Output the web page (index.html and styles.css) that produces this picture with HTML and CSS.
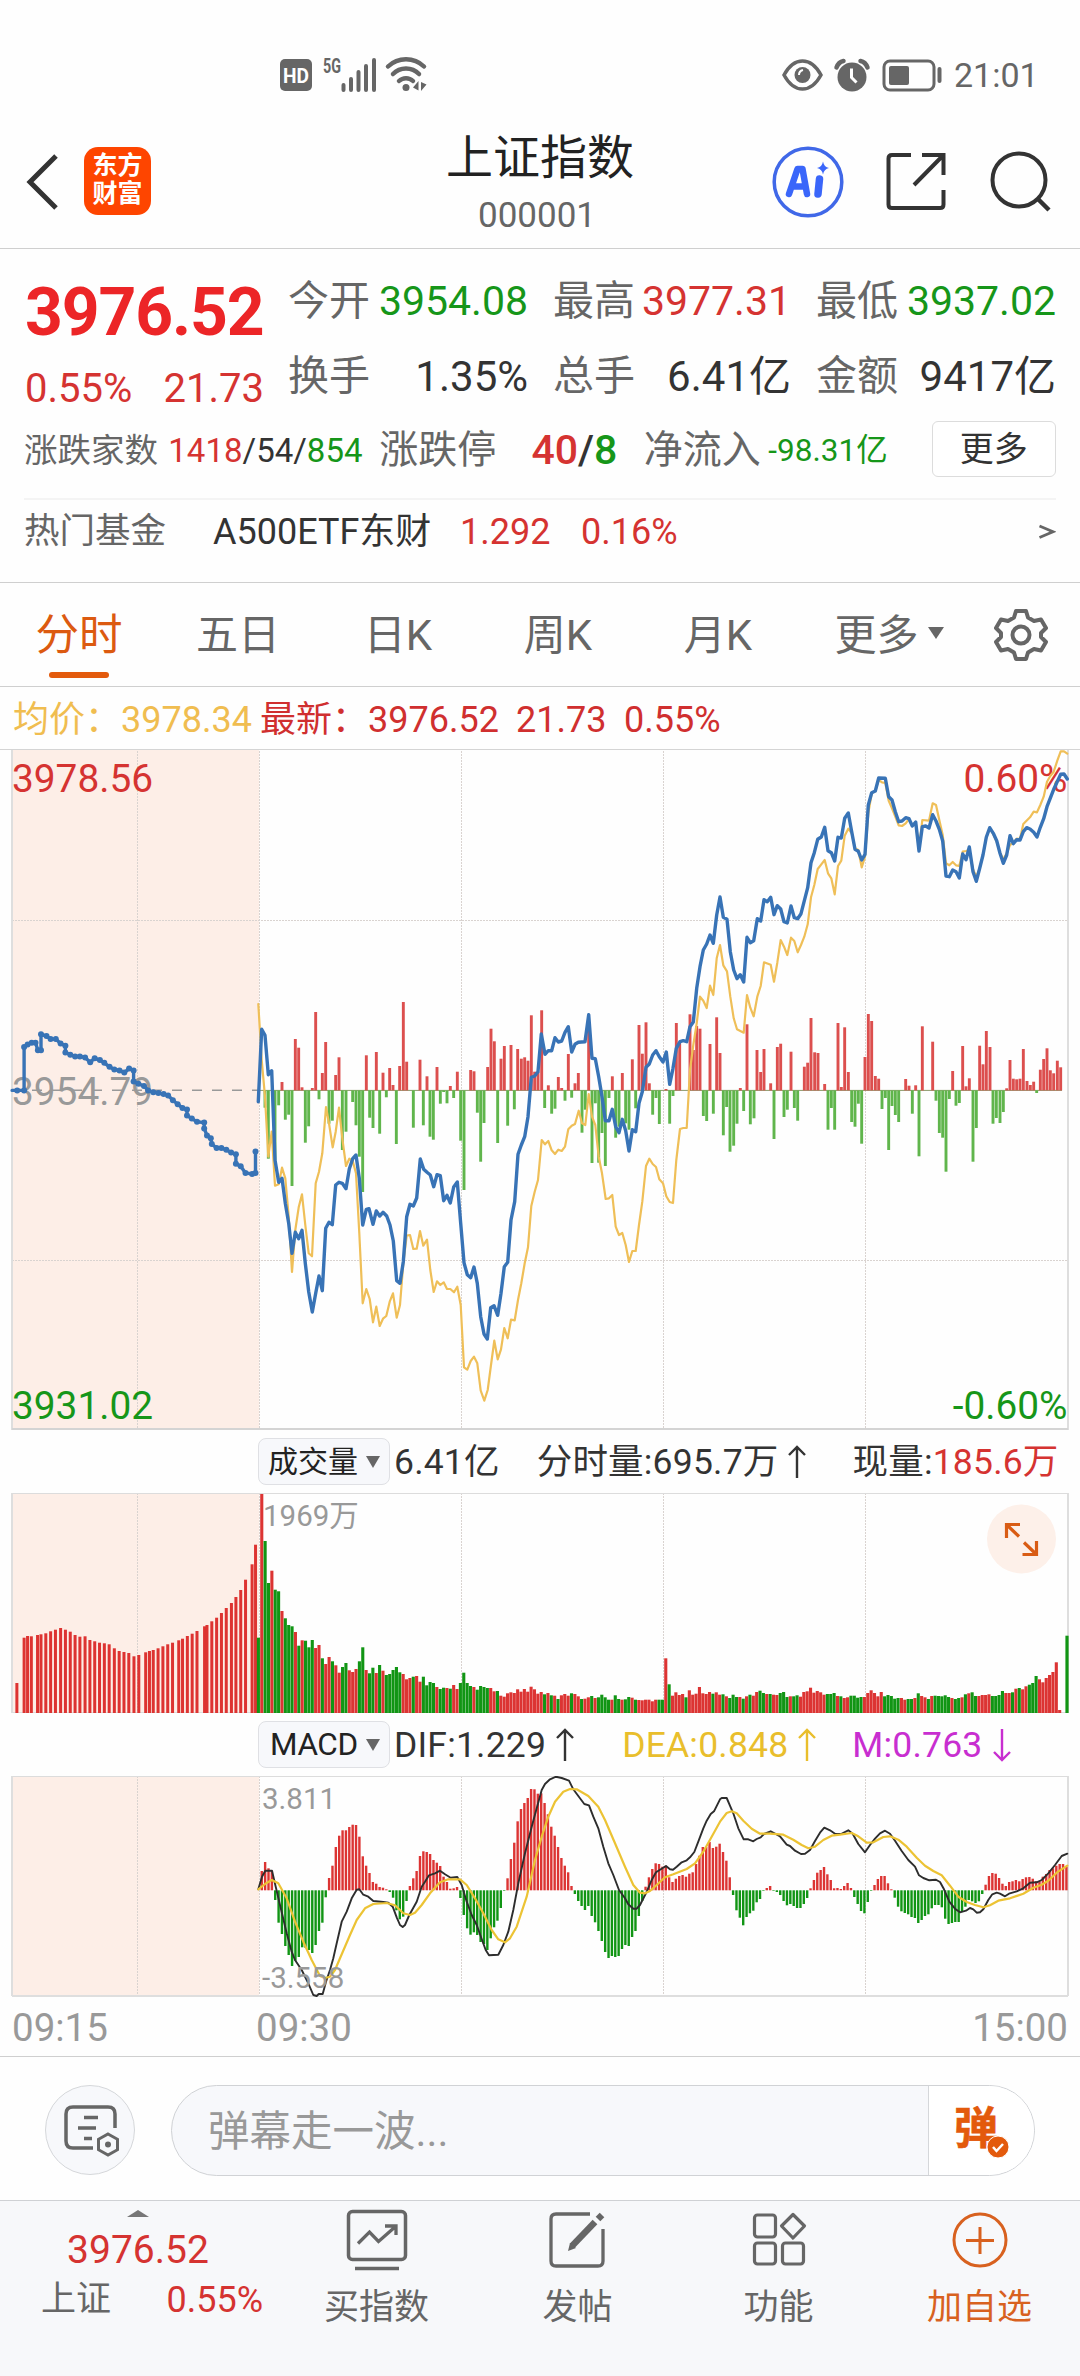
FILE: index.html
```html
<!DOCTYPE html>
<html lang="zh-CN">
<head>
<meta charset="utf-8">
<title>上证指数 000001</title>
<link rel="stylesheet" href="styles.css">
</head>
<body>
<div class="statusbar">
  <svg class="status-left" width="150" height="40" viewBox="0 0 150 40">
    <rect x="0" y="4" width="32" height="32" rx="5" fill="#666"/>
    <text x="16" y="27.500" class="hd" textLength="26" lengthAdjust="spacingAndGlyphs">HD</text>
    <text x="43" y="18" class="g5" textLength="18" lengthAdjust="spacingAndGlyphs">5G</text>
    <path d="M63.500 35v-5M71 35V24M78.500 35V17M86 35V11M94 35V5" stroke="#666" stroke-width="4" stroke-linecap="round" fill="none"/>
    <path d="M108 11.500a26 26 0 0 1 36 0M113 19a18 18 0 0 1 26 0M119 26a10 10 0 0 1 14 0" stroke="#666" stroke-width="4.500" stroke-linecap="round" fill="none"/>
    <circle cx="126" cy="32.500" r="3.500" fill="#666"/>
    <path d="M133 32.500l5.500-6.500v9.500zM141 27v9l5.500-6.500z" fill="#666"/>
  </svg>
  <svg class="status-right" width="162" height="40" viewBox="0 0 162 40">
    <path d="M2 20C8 9 14 6 20.500 6S33 9 39 20C33 31 27 34 20.500 34S8 31 2 20z" fill="none" stroke="#666" stroke-width="3.500"/>
    <circle cx="20.500" cy="20" r="8" fill="#666"/><path d="M17 20q0-4 4-5" stroke="#fff" stroke-width="2" fill="none"/>
    <circle cx="70" cy="22" r="14.500" fill="#666"/>
    <path d="M69.500 13.500v9l5 5" stroke="#fff" stroke-width="3" fill="none"/>
    <path d="M54.500 12.500q2-5.500 7-6.500M85.500 12.500q-2-5.500-7-6.500" stroke="#666" stroke-width="4.500" stroke-linecap="round" fill="none"/>
    <rect x="102" y="6" width="50" height="29" rx="6" fill="none" stroke="#666" stroke-width="3"/>
    <rect x="107" y="11" width="20" height="19" rx="2" fill="#666"/>
    <path d="M157.500 14v12" stroke="#666" stroke-width="4" stroke-linecap="round"/>
  </svg>
  <span class="clock">21:01</span>
</div>

<header class="topbar">
  <svg class="back" width="34" height="60" viewBox="0 0 34 60"><path d="M30 4L4 30l26 26" fill="none" stroke="#333" stroke-width="5"/></svg>
  <div class="logo"><span>东方</span><span>财富</span></div>
  <div class="title"><h1>上证指数</h1><p>000001</p></div>
  <svg class="ai" width="72" height="72" viewBox="0 0 72 72">
    <circle cx="36" cy="36" r="33.800" fill="none" stroke="#4068e8" stroke-width="3.500"/>
    <path d="M17 48L25.500 23h5L35 48M20.500 40.500h12" fill="none" stroke="#3a66fa" stroke-width="6.500" stroke-linecap="round" stroke-linejoin="round"/>
    <path d="M47.500 33l-1.500 15" stroke="#3a66fa" stroke-width="7.500" stroke-linecap="round"/>
    <path d="M51 15.500q1 5.500 6 6.500-5 1-6 6.500-1-5.500-6-6.500 5-1 6-6.500z" fill="#3a66fa"/>
  </svg>
  <svg class="share" width="60" height="60" viewBox="0 0 60 60"><path d="M25 4H6q-3.500 0-3.500 3.500v46Q2.500 57 6 57h48q3.500 0 3.500-3.500V39M36 4h21.500v20M57.500 4L28 34" fill="none" stroke="#333" stroke-width="4"/></svg>
  <svg class="search" width="64" height="64" viewBox="0 0 64 64"><circle cx="29" cy="29" r="26.500" fill="none" stroke="#333" stroke-width="4"/><path d="M48 48l11 11" stroke="#333" stroke-width="4.500"/></svg>
</header>

<section class="quote">
  <div class="quote-top">
    <div class="price">
      <strong>3976.52</strong>
      <div class="change"><span>0.55%</span><span>21.73</span></div>
    </div>
    <dl class="stats">
      <div><dt>今开</dt><dd class="down">3954.08</dd></div>
      <div><dt>最高</dt><dd class="up">3977.31</dd></div>
      <div><dt>最低</dt><dd class="down">3937.02</dd></div>
      <div><dt>换手</dt><dd class="wide">1.35%</dd></div>
      <div><dt>总手</dt><dd class="wide">6.41亿</dd></div>
      <div><dt>金额</dt><dd class="wide">9417亿</dd></div>
    </dl>
  </div>
  <div class="breadth">
    <span class="b-label small">涨跌家数</span>
    <span class="b-count"><i class="up">1418</i>/54/<i class="down">854</i></span>
    <span class="b-label">涨跌停</span>
    <span class="b-limit"><i class="up">40</i>/<i class="down">8</i></span>
    <span class="b-label">净流入</span>
    <span class="b-flow down">-98.31亿</span>
    <button class="more">更多</button>
  </div>
  <div class="fund">
    <span class="f-label">热门基金</span>
    <span class="f-name">A500ETF东财</span>
    <span class="f-price up">1.292</span>
    <span class="f-rate up">0.16%</span>
    <svg class="f-go" width="18" height="18" viewBox="0 0 18 18"><path d="M1.500 3L15 8.700 1.500 14.500" fill="none" stroke="#666" stroke-width="2.800"/></svg>
  </div>
</section>

<nav class="tabs">
  <span class="tab active">分时</span>
  <span class="tab">五日</span>
  <span class="tab">日K</span>
  <span class="tab">周K</span>
  <span class="tab">月K</span>
  <span class="tab tab-more">更多<i></i></span>
  <svg width="54" height="56" viewBox="0 0 54 56"><path d="M22 4h10l2 6.500 6 3.500 7-1.500 5 8.500-5 5v4l5 5-5 8.500-7-1.500-6 3.500-2 6.500H22l-2-6.500-6-3.500-7 1.500L2 35l5-5v-4l-5-5 5-8.500L14 14l6-3.500z" fill="none" stroke="#666" stroke-width="4" stroke-linejoin="round"/><circle cx="27" cy="28" r="8.500" fill="none" stroke="#666" stroke-width="4"/></svg>
</nav>

<div class="legend">
  <span class="l-avg">均价：</span><span class="l-avg l-v1">3978.34</span>
  <span class="l-last">最新：</span><span class="l-last l-v2">3976.52</span>
  <span class="l-last l-v3">21.73</span><span class="l-last l-v4">0.55%</span>
</div>

<svg class="chart" id="price" width="1080" height="681" viewBox="0 749 1080 681">
  <rect x="12" y="750" width="247" height="680" fill="#fdeee7"/>
  <path class="grid" d="M137.500 751V1429M259.500 751V1429M461.500 751V1429M663.500 751V1429M865.500 751V1429M12 920.500H1068M12 1260.500H1068"/>
  <path d="M12 750V1430M1068 750V1430" stroke="#dedede" stroke-width="2"/>
  <path d="M12 1429H1068" stroke="#d4d4d4" stroke-width="2"/>
  <path d="M0 749.500H1080" stroke="#d4d4d4" stroke-width="1"/>
  <text x="12" y="1105" class="t38 muted">3954.79</text>
  <path d="M12 1090.300H259" stroke="#999" stroke-width="1.500" stroke-dasharray="10 10"/>
  <g id="price-marks"></g>
  <text x="12" y="791.500" class="t38 up">3978.56</text>
  <text x="12" y="1418.500" class="t38 down">3931.02</text>
  <text x="1067.500" y="791.500" class="t38 up end">0.60%</text>
  <text x="1067.500" y="1418.500" class="t38 down end">-0.60%</text>
  <g id="price-lines"></g>
</svg>

<div class="indicator">
  <span class="picker">成交量<i></i></span>
  <span class="i-a">6.41亿</span>
  <span class="i-b">分时量:695.7万</span>
  <svg class="arr" width="18" height="34" viewBox="0 0 18 34"><path d="M9 33V2M1 10l8-8 8 8" fill="none" stroke="#333" stroke-width="2.400"/></svg>
  <span class="i-c">现量:<b class="up">185.6万</b></span>
</div>
<svg class="chart" id="volume" width="1080" height="220" viewBox="0 1493 1080 220">
  <rect x="12" y="1493" width="247" height="220" fill="#fdeee7"/>
  <path class="grid" d="M137.500 1493V1713M259.500 1493V1713M461.500 1493V1713M663.500 1493V1713M865.500 1493V1713"/>
  <path d="M12 1493V1713M1068 1493V1713" stroke="#dedede" stroke-width="2"/>
  <path d="M12 1493.500H1068M12 1712.500H1068" stroke="#dcdcdc"/>
  <g id="volume-marks"></g>
  <text x="263" y="1526" class="t29 muted">1969万</text>
  <circle cx="1021.500" cy="1539" r="34.500" fill="#fdf0e9"/>
  <path d="M1020 1524.500H1006.500V1538M1006.500 1524.500L1019 1536.500M1022.500 1554.500H1036.500V1541M1036.500 1554.500L1024 1542.500" fill="none" stroke="#d95c14" stroke-width="3.200"/>
</svg>

<div class="indicator macd-head">
  <span class="picker">MACD<i></i></span>
  <span class="i-a">DIF:1.229</span>
  <svg class="arr" width="18" height="34" viewBox="0 0 18 34"><path d="M9 33V2M1 10l8-8 8 8" fill="none" stroke="#333" stroke-width="2.400"/></svg>
  <span class="i-dea">DEA:0.848</span>
  <svg class="arr" width="18" height="34" viewBox="0 0 18 34"><path d="M9 33V2M1 10l8-8 8 8" fill="none" stroke="#e9be2c" stroke-width="2.400"/></svg>
  <span class="i-m">M:0.763</span>
  <svg class="arr" width="18" height="34" viewBox="0 0 18 34"><path d="M9 1v31M1 24l8 8 8-8" fill="none" stroke="#c82ed0" stroke-width="2.400"/></svg>
</div>
<svg class="chart" id="macd" width="1080" height="221" viewBox="0 1776 1080 221">
  <rect x="12" y="1776" width="247" height="220" fill="#fdeee7"/>
  <path class="grid" d="M137.500 1776V1996M259.500 1776V1996M461.500 1776V1996M663.500 1776V1996M865.500 1776V1996"/>
  <path d="M12 1776V1996M1068 1776V1996M12 1996H1068" stroke="#dedede" stroke-width="2"/>
  <path d="M12 1776.500H1068" stroke="#dcdcdc"/>
  <g id="macd-marks"></g>
  <text x="262" y="1808.500" class="t29 muted">3.811</text>
  <text x="262" y="1987.500" class="t29 muted">-3.558</text>
</svg>
<div class="axis"><span>09:15</span><span>09:30</span><span>15:00</span></div>

<section class="danmu">
  <div class="danmu-set">
    <svg width="60" height="56" viewBox="0 0 60 56"><path d="M33 46H13q-7 0-7-7V12q0-7 7-7h35q7 0 7 7v14" fill="none" stroke="#666" stroke-width="3.500"/><path d="M24 15.500h14M18 26h18M24 36.500h8" stroke="#666" stroke-width="3.500"/><path d="M48 32l9.500 5.300v10.400L48 53l-9.500-5.300V37.300z" fill="#f7f8fb" stroke="#666" stroke-width="3"/><circle cx="48" cy="42.500" r="3" fill="#666"/></svg>
  </div>
  <div class="danmu-box">
    <span class="placeholder">弹幕走一波...</span>
    <div class="danmu-toggle">弹<svg width="24" height="24" viewBox="0 0 24 24"><circle cx="12" cy="12" r="11" fill="#e35a0c" stroke="#fff"/><path d="M7 12l3.500 4L17 9" fill="none" stroke="#fff" stroke-width="2.500"/></svg></div>
  </div>
</section>

<footer class="bottom">
  <div class="b-index">
    <i class="caret"></i>
    <div class="bi-price up">3976.52</div>
    <div class="bi-row"><span>上证</span><span class="up">0.55%</span></div>
  </div>
  <div class="b-item">
    <svg width="66" height="66" viewBox="0 0 66 66"><rect x="4.500" y="4.500" width="57" height="48" rx="4" fill="none" stroke="#666" stroke-width="3.500"/><path d="M14 36.500L25.500 25l9 9.500L51 20M41 19h11v9M11 61.500h44" fill="none" stroke="#666" stroke-width="3.300"/></svg>
    <span>买指数</span>
  </div>
  <div class="b-item">
    <svg width="66" height="66" viewBox="0 0 66 66"><path d="M45 7H11q-5 0-5 5v42q0 5 5 5h42q5 0 5-5V22" fill="none" stroke="#666" stroke-width="3.300"/><path d="M27 39L50 15" stroke="#666" stroke-width="6.500"/><path d="M23 44l2-8 6 5z" fill="#666"/><path d="M53 12l4-4" stroke="#666" stroke-width="6.500"/></svg>
    <span>发帖</span>
  </div>
  <div class="b-item">
    <svg width="66" height="66" viewBox="0 0 66 66"><g fill="none" stroke="#666" stroke-width="3.200"><rect x="8.500" y="8" width="21" height="22" rx="3"/><rect x="8.500" y="36" width="21" height="21" rx="3"/><rect x="36.500" y="36" width="21" height="21" rx="3"/><path d="M47 7.500L58.500 19 47 31 35.500 19z" stroke-linejoin="round"/></g></svg>
    <span>功能</span>
  </div>
  <div class="b-item add">
    <svg width="66" height="66" viewBox="0 0 66 66"><circle cx="33" cy="33" r="26" fill="none" stroke="#d8611f" stroke-width="3"/><path d="M19 33.500h28M33 20v27" stroke="#d8611f" stroke-width="3"/></svg>
    <span>加自选</span>
  </div>
</footer>
<script src="chart.js"></script>
</body>
</html>
```
FILE: styles.css
```css
* { box-sizing: border-box; }
body, h1, p, dl, dd { margin: 0; }
body {
  width: 1080px;
  height: 2376px;
  overflow: hidden;
  background: #fefefe;
  color: #333;
  font-family: Roboto, "Noto Sans CJK SC", sans-serif;
  font-size: 36px;
  line-height: 1;
}
i { font-style: normal; }
b { font-weight: 400; }
svg { display: block; flex: none; }
.up { color: #d53331; fill: #d53331; }
.down { color: #169619; fill: #169619; }
.muted { fill: #999; }

.statusbar { display: flex; align-items: center; height: 150px; padding-left: 280px; }
.hd { font: 700 20px Roboto, sans-serif; fill: #fff; text-anchor: middle; }
.g5 { font: 700 20px Roboto, sans-serif; fill: #666; }
.status-right { margin-left: 352px; }
.clock { margin-left: 10px; font-size: 34px; color: #666; white-space: nowrap; }

.topbar { display: flex; height: 99px; border-bottom: 1px solid #cfcfcf; padding-left: 26px; }
.back { margin-top: 2px; }
.logo {
  margin: -3px 0 0 24px; width: 67px; height: 68px; border-radius: 14px;
  background: #fe4500; color: #fff; font-size: 25px; font-weight: 700;
  line-height: 28px; text-align: center; padding-top: 5px;
}
.logo span { display: block; }
.title { width: 320px; margin: -18px 0 0 229px; text-align: center; }
.title h1 { font-size: 47px; font-weight: 400; line-height: 52px; color: #222; }
.title p { font-size: 35px; color: #666; line-height: 42px; margin-top: 11px; padding-right: 6px; }
.ai { margin: -4px 0 0 72px; }
.share { margin: 1px 0 0 42px; }
.search { margin: 1px 0 0 44px; }

.quote { height: 334px; border-bottom: 1px solid #cfcfcf; padding: 0 24px; }
.quote-top { display: flex; }
.price { width: 264px; padding: 31px 0 0 1px; color: #ec2527; }
.price strong { display: block; font-size: 66px; line-height: 66px; letter-spacing: -1.100px; font-weight: 700; }
.change { display: flex; justify-content: space-between; width: 239px; margin-top: 23px; font-size: 40px; color: #d53331; }
.stats { display: grid; grid-template-columns: 240px 238px 240px; column-gap: 25px; grid-auto-rows: 75px; padding-top: 15px; font-size: 41px; }
.stats div { display: flex; justify-content: space-between; align-items: center; }
.stats dt { color: #666; }
.stats .wide { font-size: 42px; }
.breadth { display: flex; align-items: center; height: 58px; margin-top: 6px; white-space: nowrap; }
.b-label { font-size: 39px; color: #666; padding-top: 3px; }
.b-label.small { font-size: 33.500px; width: 145px; }
.b-count { font-size: 33px; width: 212px; padding-top: 3px; }
.b-limit { font-size: 41px; font-weight: 500; margin-left: 35px; width: 113px; padding-top: 3px; }
.b-flow { font-size: 31.500px; margin-left: 7px; width: 164px; padding-top: 3px; }
.b-label:nth-child(5) { width: 118px; }
.more { margin-left: auto; width: 125px; height: 56px; padding: 0; border: 1px solid #dcdcdc; border-radius: 6px; background: #fff; color: #333; font: 34px/50px Roboto, "Noto Sans CJK SC", sans-serif; }
.fund { display: flex; align-items: center; height: 66px; margin-top: 20px; border-top: 2px solid #f4f4f4; font-size: 36px; white-space: nowrap; }
.f-label { font-size: 35.500px; color: #666; width: 189px; }
.f-name { width: 247px; }
.f-price { width: 121px; }
.f-go { margin-left: auto; }

.tabs { display: flex; align-items: center; height: 104px; border-bottom: 1px solid #cfcfcf; color: #666; font-size: 42px; }
.tab { width: 160px; height: 100%; display: flex; align-items: center; justify-content: center; padding-top: 3px; }
.tab.active { color: #dc5a10; position: relative; width: 158px; font-size: 43.500px; }
.tab.active::after { content: ""; position: absolute; bottom: 8px; width: 60px; height: 6px; border-radius: 3px; background: #e35a0c; }
.tab-more { width: 182px; }
.tab-more i { margin-left: 9px; border: 8px solid transparent; border-top: 12px solid #666; border-bottom: 0; margin-bottom: 6px; }
.tabs svg { margin-left: 14px; }

.legend { display: flex; align-items: center; height: 62px; padding: 3px 0 0 13px; font-size: 36px; white-space: nowrap; }
.l-avg { color: #f0bd50; }
.l-last { color: #d02f2f; }
.l-v1 { width: 139px; }
.l-v2 { width: 148px; }
.l-v3 { width: 108px; }

.chart { overflow: hidden; }
.chart text { font-family: Roboto, "Noto Sans CJK SC", sans-serif; }
.t38 { font-size: 38.800px; }
.t29 { font-size: 29.500px; }
.end { text-anchor: end; }
.grid { fill: none; stroke: #d9d3d0; stroke-width: 1; stroke-dasharray: 2 1; }
.line { fill: none; stroke-linejoin: round; stroke-linecap: round; }
.blue { stroke: #3873b6; stroke-width: 3.400; }
.gold { stroke: #efbf58; stroke-width: 2.200; }
.dif { stroke: #2d2d2d; stroke-width: 1.900; }
.dea { stroke: #ecc334; stroke-width: 2.200; }

.indicator { display: flex; align-items: center; height: 63px; padding: 2px 0 0 258px; font-size: 35.500px; letter-spacing: .2px; white-space: nowrap; }
.picker { display: flex; align-items: center; justify-content: space-between; width: 132px; height: 47px; margin-top: -2px; padding: 0 9px; border: 1px solid #dfe0e4; border-radius: 8px; background: #f7f8fb; color: #222; font-size: 30px; letter-spacing: 0; }
.macd-head .picker { font-size: 31.500px; letter-spacing: -.4px; padding-left: 11px; }
.picker i { border: 7px solid transparent; border-top: 12px solid #666; border-bottom: 0; }
.i-a { margin-left: 4px; }
.i-b { margin-left: 37px; }
.arr { margin: -2px 0 0 10px; }
.i-c { margin-left: 46px; }
.i-dea { margin-left: 48px; color: #e9be2c; }
.i-m { margin-left: 36px; color: #c82ed0; }

.axis { display: grid; grid-template-columns: 244px 1fr auto; height: 60px; padding: 3px 12px 0 12px; align-items: center; border-bottom: 1px solid #cfcfcf; font-size: 38.500px; color: #999; }

.danmu { display: flex; align-items: center; height: 143px; padding: 3px 45px 0; }
.danmu-set { display: flex; align-items: center; justify-content: center; width: 90px; height: 90px; border: 1px solid #d5d7da; border-radius: 50%; background: #f7f8fb; }
.danmu-box { display: flex; width: 864px; height: 91px; margin-left: 36px; border: 1px solid #d0d2d5; border-radius: 46px; background: #f7f8fb; overflow: hidden; }
.placeholder { flex: 1; padding-left: 36px; line-height: 91px; font-size: 41.500px; color: #999; }
.danmu-toggle { position: relative; width: 106px; border-left: 1px solid #d5d7da; background: #fff; color: #e35a0c; font-size: 44px; font-weight: 700; -webkit-text-stroke: .6px #e35a0c; line-height: 87px; padding-left: 25px; }
.danmu-toggle svg { position: absolute; left: 57px; top: 49px; }

.bottom { display: flex; height: 176px; border-top: 1px solid #cfd1d4; background: #f7f8fa; color: #666; }
.b-index { width: 276px; display: flex; flex-direction: column; align-items: center; padding-top: 9px; }
.caret { border: 11px solid transparent; border-bottom: 7px solid #777; border-top: 0; }
.bi-price { font-size: 39px; line-height: 44px; margin-top: 11px; }
.bi-row { display: flex; justify-content: space-between; align-items: center; width: 222px; margin: 7px 0 0 28px; font-size: 36px; line-height: 42px; }
.bi-row span:first-child { font-size: 35px; }
.b-item { width: 201px; display: flex; flex-direction: column; align-items: center; padding-top: 6px; font-size: 35px; }
.b-item span { line-height: 40px; margin-top: 15px; }
.add { color: #d8611f; }
```
FILE: chart.js
```js
const RED = '#dc3433', GREEN = '#119514';

const parse = s => s.trim().split(/\s+/).map(p => p.split(',').map(Number));

// Maps sampled coordinates to chart pixels: [originX, originY, scaleX, scaleY]
const LEFT = [250, 960, 3, 3], RIGHT = [640, 740, 3, 3];
const AUCTION = [0, 740, 2.9037, 2.24];
const map = (pts, [ox, oy, sx, sy]) => pts.map(([x, y]) => [ox + x / sx, oy + y / sy]);
const xOf = minute => 258.4 + minute * 3.3667;

function line(pts, cls) {
  return `<polyline class="line ${cls}" points="${pts.map(p => p[0].toFixed(1) + ',' + p[1].toFixed(1)).join(' ')}"/>`;
}
function bar(x, y, base, w, color) {
  return `<rect x="${(x - w / 2).toFixed(2)}" y="${Math.min(y, base).toFixed(1)}" width="${w}" height="${Math.max(Math.abs(base - y), .6).toFixed(1)}" fill="${color}"/>`;
}

// ---- price ----
const blueLeft = `25,425 35,208 45,226 55,344 65,332 75,600 86,667 96,655 106,730 116,790 126,880 136,817 146,836 156,811 166,910 176,995 187,1056 197,1000 207,948 217,992 227,805 237,787 247,794 257,675 267,667 277,670 288,686 298,627 308,596 318,585 328,655 338,795 349,748 357,746 369,793 379,753 389,768 399,757 410,768 420,795 430,843 440,962 450,970 460,905 470,770 480,733 490,738 500,714 511,597 521,628 531,637 541,645 551,680 561,644 571,647 581,722 591,706 601,729 611,681 622,666 632,790 642,908 652,944 662,953 672,921 682,970 692,1070 702,1122 712,1137 722,1043 732,1037 743,1066 753,1000 763,920 773,907 783,780 794,725 804,583 814,555 824,530 834,470 844,352 854,348 864,335 874,222 885,283 895,272 905,272 915,233 925,246 935,243 945,217 955,200 965,276 975,253 985,247 1005,245 1016,164 1026,295 1036,296 1046,350 1056,410 1066,482 1077,482 1087,448 1097,500 1107,518 1117,478 1127,512 1137,573 1147,509 1157,515 1167,430 1177,395 1188,322 1198,312 1208,285 1218,272 1228,290 1239,306 1249,276 1259,373 1269,325 1279,265 1290,245`;
const blueRight = `120,905 130,902 140,905 150,860 160,846 170,745 180,680 190,630 200,612 210,585 220,610 230,525 240,471 250,532 261,538 271,635 281,690 291,716 301,704 311,726 321,592 331,608 341,602 352,536 362,543 372,479 382,485 392,472 402,524 412,497 422,507 432,545 442,549 453,498 463,533 473,536 483,521 503,443 513,368 523,338 533,298 544,291 554,262 564,332 574,338 584,363 594,292 604,294 614,235 625,219 635,275 645,328 655,334 665,360 675,343 685,195 695,158 706,153 716,114 736,115 746,170 756,180 766,215 776,245 786,243 797,233 807,236 817,258 827,246 837,333 847,260 857,258 867,264 878,224 888,243 898,268 908,303 918,408 928,410 938,390 948,395 958,414 968,342 978,359 988,321 999,395 1009,424 1019,385 1029,345 1039,292 1049,263 1060,280 1070,302 1080,340 1090,370 1100,345 1110,287 1120,311 1130,299 1140,300 1150,275 1160,263 1170,267 1181,277 1191,291 1201,262 1211,236 1221,200 1241,148 1262,103 1272,102 1282,117`;
const goldLeft = `25,132 35,300 45,410 55,590 65,515 75,677 86,673 96,623 106,655 116,770 126,936 136,810 146,742 156,703 166,795 176,880 186,889 197,670 207,635 217,580 228,441 237,490 248,562 257,515 267,443 277,535 288,618 298,596 308,603 318,640 328,820 338,1030 349,987 359,1017 369,1087 379,1040 389,1098 399,1076 409,1068 419,1025 429,1000 440,1073 450,1035 460,910 470,827 480,825 490,867 500,866 510,813 520,857 531,839 541,930 551,996 561,964 571,975 581,967 591,987 601,987 612,997 622,980 632,1035 642,1222 652,1229 662,1203 672,1190 682,1210 692,1292 703,1322 713,1290 723,1215 733,1142 743,1198 753,1168 763,1104 773,1135 783,1079 794,1081 804,1020 814,970 824,910 834,862 844,738 854,695 864,660 875,540 885,553 895,543 905,571 915,582 925,569 935,573 945,560 955,508 965,497 975,492 986,452 996,490 1006,495 1016,402 1026,470 1036,495 1046,590 1056,640 1067,717 1077,715 1087,705 1097,800 1107,825 1117,819 1127,855 1137,906 1147,873 1157,873 1167,795 1177,725 1188,618 1198,596 1208,612 1218,621 1228,658 1239,670 1249,709 1259,726 1269,729 1279,600 1290,507`;
const goldRight = `120,1167 130,1164 140,1164 150,990 160,915 170,850 180,770 190,782 200,804 210,737 220,765 230,655 240,615 250,676 261,694 271,770 281,835 291,868 311,878 321,765 331,803 341,829 352,770 362,738 372,667 392,674 402,725 412,668 422,600 432,620 442,645 453,593 463,603 473,637 483,615 493,590 503,553 513,472 523,435 533,387 544,373 554,360 564,400 574,415 584,463 594,378 604,362 614,287 625,266 635,280 645,325 655,330 665,382 675,350 685,220 695,160 706,153 716,120 726,127 736,129 746,182 756,205 766,230 776,256 786,258 797,250 807,237 817,258 827,246 837,328 847,240 867,242 878,190 888,195 898,240 908,285 918,370 928,376 938,366 948,376 958,378 968,335 978,333 988,330 999,388 1009,410 1019,385 1029,345 1039,292 1049,265 1060,283 1070,305 1080,338 1090,358 1100,340 1110,315 1120,308 1130,296 1140,297 1150,252 1170,232 1181,215 1191,217 1201,195 1211,170 1221,125 1231,108 1241,95 1252,62 1262,34 1272,34 1282,41`;
const auction = `35,785 50,785 70,785 70,688 80,682 92,678 103,678 110,695 119,695 119,659 135,663 147,670 162,670 176,680 190,685 190,700 204,705 218,709 232,709 247,711 262,722 275,713 290,717 303,723 318,732 332,738 347,740 361,745 375,736 388,740 388,765 402,770 418,775 430,785 445,789 460,791 475,793 488,796 502,807 516,816 530,824 543,828 543,841 557,848 572,855 593,857 593,870 601,886 612,892 615,905 629,914 643,914 657,918 671,924 685,928 685,949 699,955 713,970 732,972 742,970 742,922`;

// Buying / selling strength bars around the previous close
const strengthLeft = `96,366 136,237 146,263 156,382 187,384 197,156 217,339 227,246 257,345 267,292 349,286 379,276 399,338 419,324 429,375 449,318 460,126 470,305 510,299 531,349 561,321 601,378 622,335 662,330 672,334 713,321 723,206 733,244 753,296 763,258 783,255 803,267 814,296 824,292 834,302 844,166 854,335 864,335 875,151 895,376 925,351 935,384 955,282 975,370 985,339 1016,210 1087,349 1117,339 1147,298 1167,195 1177,281 1188,187 1198,370 1248,387 1279,189 45,443 55,596 75,600 86,436 106,479 116,464 126,678 166,548 176,499 207,418 237,491 247,482 277,570 288,515 308,426 318,496 328,590 338,696 359,473 369,504 389,521 409,412 439,552 490,503 520,496 540,530 550,539 571,431 581,396 591,430 611,414 632,542 642,690 682,458 692,605 702,489 743,549 773,497 793,448 884,444 905,461 915,446 945,422 965,413 996,518 1006,449 1026,609 1036,430 1046,608 1056,519 1066,618 1077,414 1097,533 1107,500 1127,490 1137,509 1157,445 1208,464 1218,414 1228,492 1259,491 1269,408`;
const strengthRight = `119,908 150,823 160,930 170,858 180,866 210,912 230,832 240,939 301,1044 321,853 351,930 362,996 372,927 392,1030 412,921 422,911 453,935 493,980 503,968 513,834 524,937 534,939 554,1032 594,849 604,1041 614,862 625,996 675,951 685,822 695,843 706,1008 716,1016 797,1017 807,1037 827,1036 847,859 878,905 938,993 968,918 978,1039 988,1015 1019,917 1029,973 1039,873 1050,921 1100,1045 1110,960 1120,1016 1130,1018 1140,1016 1150,927 1161,1023 1171,1035 1181,1025 1201,989 1211,957 1221,925 1231,991 1241,1000 1252,962 1262,982 190,1128 200,1143 220,1121 250,1186 260,1101 270,1235 281,1217 291,1151 311,1113 331,1153 342,1135 402,1197 432,1131 442,1109 463,1104 473,1142 564,1169 574,1104 584,1169 635,1146 645,1160 655,1091 665,1211 726,1107 736,1074 746,1230 756,1098 766,1125 776,1146 817,1121 837,1249 888,1082 898,1179 908,1193 918,1295 928,1077 948,1097 958,1089 999,1265 1009,1164 1059,1151 1069,1134 1080,1149 1090,1116 1190,1059`;

const CLOSE = 1090.4;
const strength = [...map(parse(strengthLeft), LEFT), ...map(parse(strengthRight), RIGHT)];
let marks = `<path d="M259 ${CLOSE}H1062" stroke="#8b9a6b" stroke-width="1"/>`;
for (const [x, y] of strength) marks += bar(x, y, CLOSE, 2.9, y < CLOSE ? '#dc4f4e' : '#60b54c');
document.getElementById('price-marks').innerHTML = marks;

const open = map(parse(auction), AUCTION);
document.getElementById('price-lines').innerHTML =
  line([...map(parse(goldLeft), LEFT), ...map(parse(goldRight), RIGHT)], 'gold') +
  line([...map(parse(blueLeft), LEFT), ...map(parse(blueRight), RIGHT)], 'blue') +
  line(open, 'blue') +
  open.slice(1).map(p => `<circle cx="${p[0].toFixed(1)}" cy="${p[1].toFixed(1)}" r="3" fill="#3873b6"/>`).join('');

// ---- volume ----
const auctionVolume = `49,759 70,623 80,618 91,619 109,615 119,613 133,610 147,604 161,599 176,594 190,599 204,605 218,615 232,620 247,619 261,630 275,634 289,638 303,640 317,643 332,655 346,663 360,666 374,669 389,679 403,675 423,667 434,663 445,660 459,655 473,649 487,643 501,638 519,631 530,626 544,618 558,611 572,603 594,589 601,585 615,574 629,563 643,549 657,534 672,519 685,501 699,480 713,449 732,403 742,344`;
const volume = `g623 r192 g333 g459 r422 g479 g484 r543 g565 g585 g589 r606 g647 r631 g632 g652 g630 r654 r645 g685 r702 r681 g694 r706 r728 g711 g699 r721 r726 r717 g694 g652 r720 g730 g713 r729 g705 r722 g735 g732 g720 g711 g727 r732 r748 r744 g740 r738 r755 g740 g766 g756 g759 r771 g777 g773 r774 g776 r765 r777 g759 g728 g759 g768 r771 g779 g768 g771 g774 r774 r784 g783 r797 r800 r790 r787 r789 r778 r785 r777 r785 r770 r778 r791
r786 g793 r789 g796 r797 g807 r796 r792 r797 g790 r792 r799 g807 r806 r802 g798 r804 g802 g794 g802 g809 r809 g796 g807 r809 g808 g801 r803 g809 r810 r811 r809 r809 r814 r809 g809 g809 r685 g763 r797 r787 r795 r792 g802 r781 r794 r791 r771 r790 r792 r786 g791 r787 r794 g793 r799 g804 g794 g801 r801 g806 r799 g794 r797 r786 g782 g789 r792 g792 r794 r795 g789 g786 g801 r799 g799 g796 r800 r786 r784 r773 r788 r783 r787 r794 g792 g792 g789 r798 g799 r804 r802 g797 g797 g803 g801 r801 r789 r781 r789 r799 r786 g799 g795 g798 g806 g804 r804 r809 g807 g807 r804 g790 r798 r802 g807 r798 g797 g798 g799 g796 g801 r804 g807 g804 r802 g793 r790 g787 g798 r798 r795 r795 r793 g798 g798 g795 g783 r789 r789 g787 r776 g774 r778 r769 g764 g759 g738 r748 r757 r744 r735 r726 r697 r840`.split(/\s+/);

const FLOOR = 1713;
const vy = v => 1430 + v / 3;
let vol = parse(auctionVolume).map(([x, y]) => bar(x / 2.9037, vy(y), FLOOR, 3, '#dd3331')).join('');
volume.forEach((v, i) => { vol += bar(xOf(i), vy(+v.slice(1)), FLOOR, 3.1, v[0] === 'r' ? RED : GREEN); });
vol += bar(1067, vy(617), FLOOR, 3.2, GREEN);
document.getElementById('volume-marks').innerHTML = vol;

// ---- MACD ----
const hist = `453 426 445 452 540 608 642 678 705 738 722 711 682 683 690 699 675 633 608 532 474 437 381 347 331 331 321 314 315 350 409 437 459 486 491 501 503 508 516 533 571 598 590 543 498 475 453 408 394 396 402 420 428 438 470 486 506 505 501 534 585 625 644 637 645 666 672 690 655 622 602 564 512 475 417 368 304 267 249 234 207 208 221 220 249 283 320 347 381 414 437 457 498 522 543 558 570 558 588 607 633 663 696 714 708 711 708 687 675 678 651 633 588 543 500
472 447 430 432 440 437 472 486 476 468 465 470 461 457 432 407 381 381 366 384 380 371 396 422 472 525 571 593 616 591 580 572 547 537 512 504 498 512 516 525 543 556 552 558 564 564 552 534 505 480 458 450 441 463 480 505 504 507 498 489 504 531 552 573 580 546 512 495 477 468 468 490 508 533 560 574 579 583 591 594 609 600 588 583 565 555 555 562 596 612 609 606 606 576 560 540 544 549 544 522 494 468 459 461 474 491 498 486 484 480 484 477 472 471 476 484 484 470 462 450 445 437 432 432 440`.split(/\s+/).map(Number);
const difLeft = `55,508 66,470 76,452 96,452 106,495 120,555 140,640 155,695 165,720 185,750 205,790 220,825 230,828 236,822 248,822 258,785 270,750 280,715 290,670 305,605 320,575 335,535 350,509 358,508 370,524 385,530 400,543 430,546 445,548 458,560 470,592 480,615 488,621 495,615 508,585 530,545 545,500 555,485 567,466 585,460 600,452 615,463 632,473 652,471 665,495 680,545 695,585 710,615 725,657 737,690 747,706 775,704 790,675 805,635 820,570 835,490 855,400 875,320 890,265 905,210 915,192 930,178 948,170 965,174 987,182 1000,208 1015,228 1033,252 1047,256 1060,290 1075,325 1090,380 1105,430 1120,465 1137,510 1155,535 1165,553 1180,566 1190,566 1200,555 1220,515`;
const difRight = `35,480 48,457 78,438 90,448 99,449 110,440 125,427 140,421 150,412 163,396 175,365 190,325 200,302 212,282 222,274 240,238 245,234 260,234 272,262 280,280 295,325 311,358 325,358 340,364 350,357 362,352 372,342 392,334 402,339 420,349 440,374 450,378 465,392 483,402 495,401 510,390 525,363 540,338 553,323 570,331 585,341 603,342 625,331 638,341 655,372 675,397 690,375 705,356 720,340 735,332 750,341 765,362 785,393 805,420 825,440 837,466 850,474 868,481 888,479 900,486 912,508 928,545 945,566 960,577 978,572 990,564 1000,568 1010,578 1020,577 1030,568 1045,540 1057,523 1070,518 1080,521 1095,529 1107,521 1130,514 1150,505 1170,488 1190,487 1205,480 1225,460 1245,435 1265,408 1282,401`;
const deaLeft = `55,508 75,492 95,480 115,490 140,535 165,605 190,665 215,720 240,768 255,774 270,770 285,750 300,715 330,645 350,600 375,565 400,552 440,549 465,556 490,580 510,585 525,578 545,555 570,520 600,487 625,478 660,478 680,495 705,535 730,580 755,630 775,658 795,667 810,655 830,620 860,530 885,420 905,350 925,290 945,245 970,215 990,207 1010,208 1045,228 1075,260 1095,300 1125,370 1155,440 1180,495 1200,518 1215,520`;
const deaRight = `30,513 50,495 75,472 100,463 140,447 165,430 190,395 215,350 240,305 260,279 275,274 290,280 310,302 335,326 360,341 390,341 430,344 460,359 485,375 505,385 525,380 550,360 575,347 600,344 635,339 655,349 680,368 700,367 730,351 750,349 775,359 800,380 830,413 855,437 880,453 905,466 930,497 955,530 980,546 1005,555 1030,562 1050,556 1075,542 1110,535 1150,521 1180,503 1205,494 1225,482 1250,458 1282,437`;
const ML = [240, 1720, 3, 3], MR = [640, 1720, 3, 3], ZERO = 1890.3;
document.getElementById('macd-marks').innerHTML =
  hist.map((v, i) => bar(xOf(i + 1), 1720 + v / 3, ZERO, 2.4, v < 511 ? RED : GREEN)).join('') +
  line([...map(parse(difLeft), ML), ...map(parse(difRight), MR)], 'dif') +
  line([...map(parse(deaLeft), ML), ...map(parse(deaRight), MR)], 'dea');
```
